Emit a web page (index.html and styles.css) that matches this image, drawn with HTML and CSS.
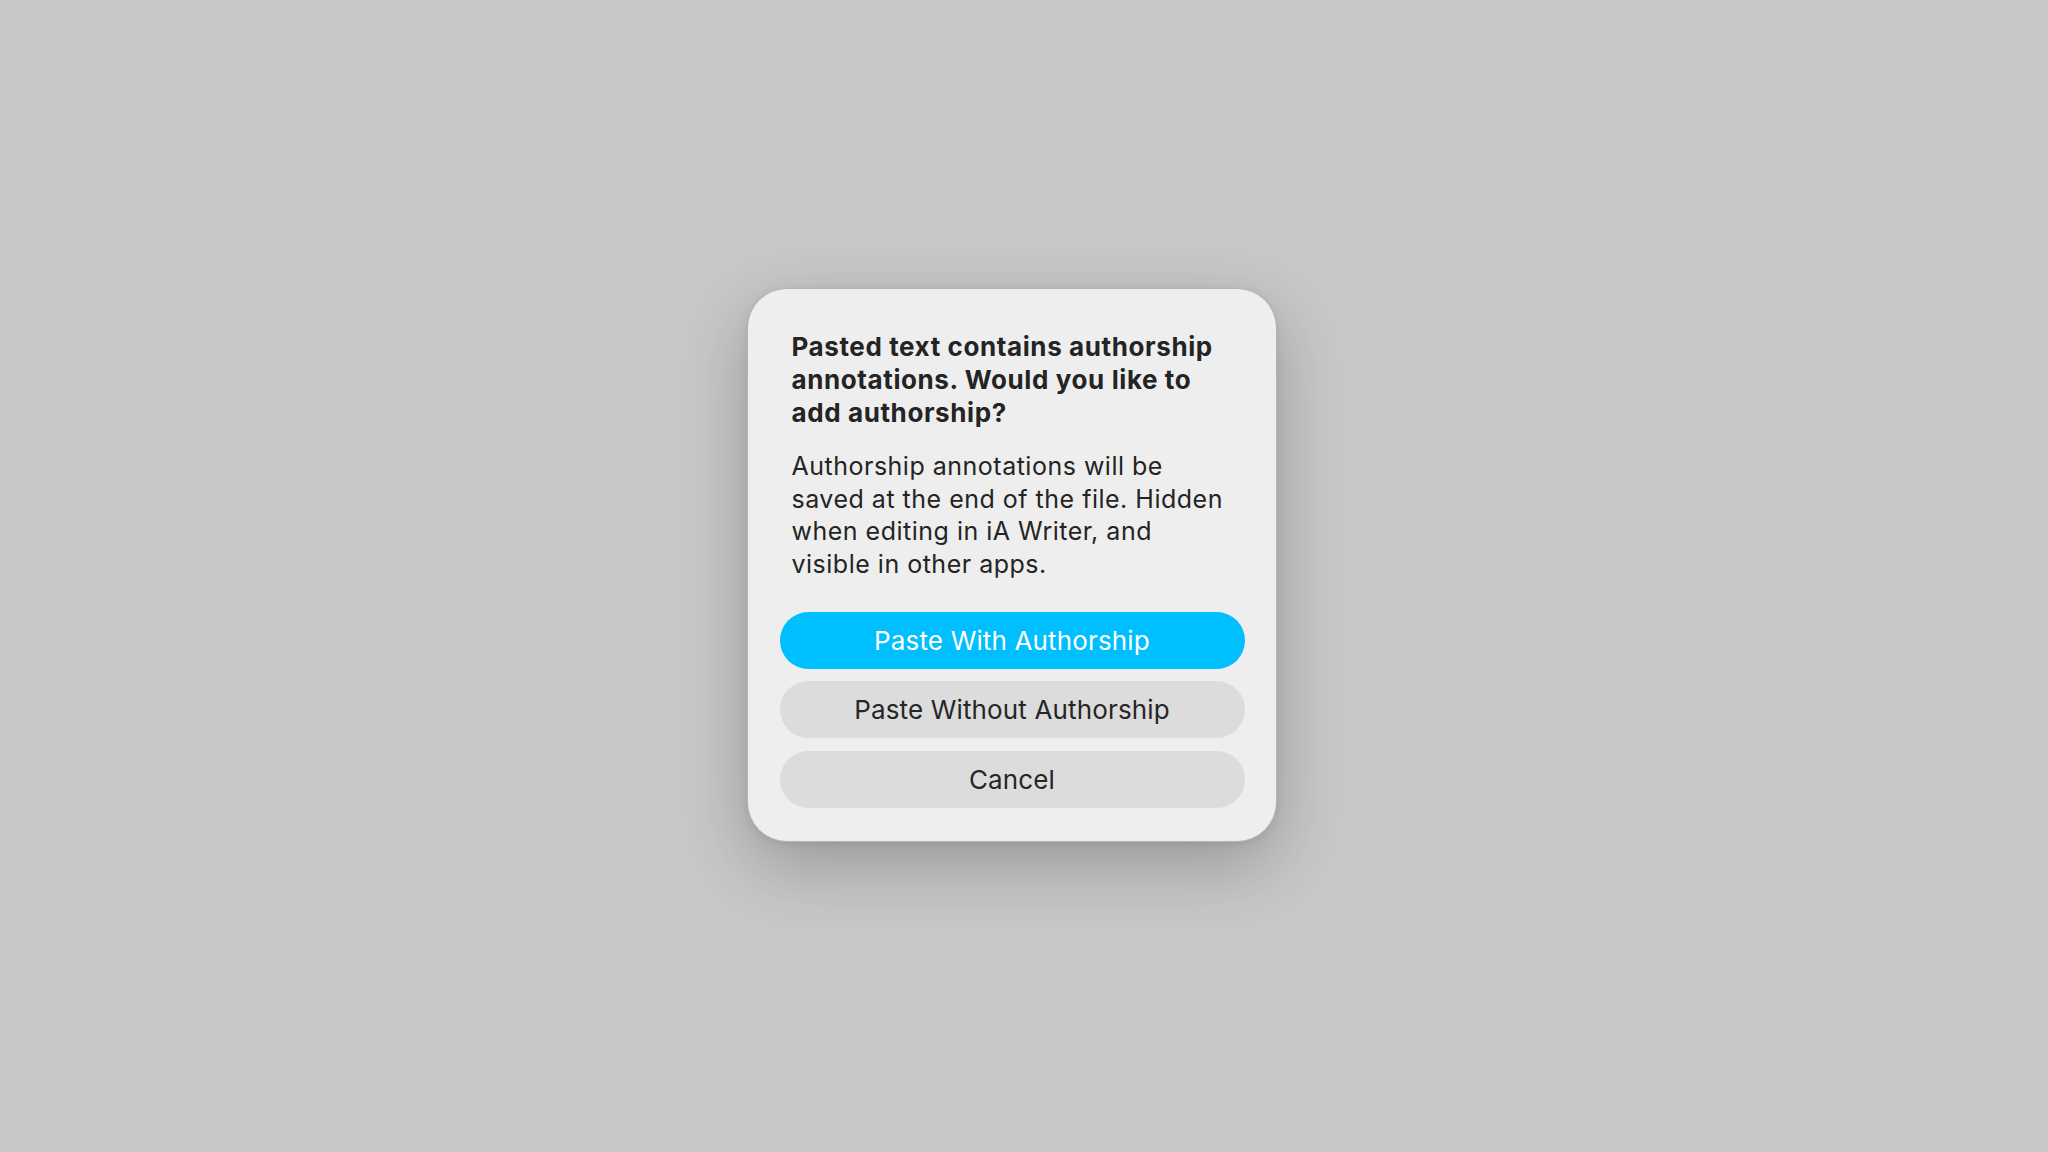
FILE: index.html
```html
<!DOCTYPE html>
<html lang="en">
<head>
    <meta charset="UTF-8">
    <meta name="viewport" content="width=device-width, initial-scale=1.0">
    <title>Paste Authorship</title>
    <link rel="stylesheet" href="styles.css">
</head>
<body>
    <div class="backdrop">
        <div class="alert" role="alertdialog">
            <div class="alert-text">
                <h1 class="alert-title">Pasted text contains authorship annotations. Would you like to add authorship?</h1>
                <p class="alert-message">Authorship annotations will be saved at the end of the file. Hidden when editing in iA Writer, and visible in other apps.</p>
            </div>
            <div class="alert-buttons">
                <button class="btn btn-primary">Paste With Authorship</button>
                <button class="btn">Paste Without Authorship</button>
                <button class="btn">Cancel</button>
            </div>
        </div>
    </div>
</body>
</html>
```

FILE: styles.css
```css
* {
    box-sizing: border-box;
    margin: 0;
    padding: 0;
}

body {
    font-family: Inter, "Noto Sans", sans-serif;
    color: #242424;
    background-color: #c8c8c8;
}

.backdrop {
    width: 100vw;
    height: 100vh;
    display: flex;
    align-items: center;
    justify-content: center;
    padding: 0 25px 22px 0;
}

.alert {
    width: 530px;
    background: #eeeeee;
    border: 1px solid #b4b4b4;
    border-radius: 40px;
    padding: 42px 31px 33px 32px;
    box-shadow: 0 24px 70px rgba(0, 0, 0, 0.24), 0 2px 8px rgba(0, 0, 0, 0.08);
}

.alert-text {
    padding: 0 8px 0 12px;
}

.alert-title {
    font-size: 26px;
    font-weight: 700;
    line-height: 32.6px;
    letter-spacing: 0.6px;
}

.alert-message {
    margin-top: 21px;
    font-size: 25px;
    font-weight: 400;
    line-height: 32.6px;
    letter-spacing: 0.5px;
}

.alert-buttons {
    margin-top: 31px;
    display: flex;
    flex-direction: column;
    gap: 12.5px;
}

.btn {
    height: 57px;
    border: none;
    border-radius: 29px;
    background: #dcdcdc;
    color: #262626;
    font-family: inherit;
    font-size: 26px;
    font-weight: 400;
    letter-spacing: 0.15px;
}

.btn-primary {
    background: #00bfff;
    color: #ffffff;
}
```
